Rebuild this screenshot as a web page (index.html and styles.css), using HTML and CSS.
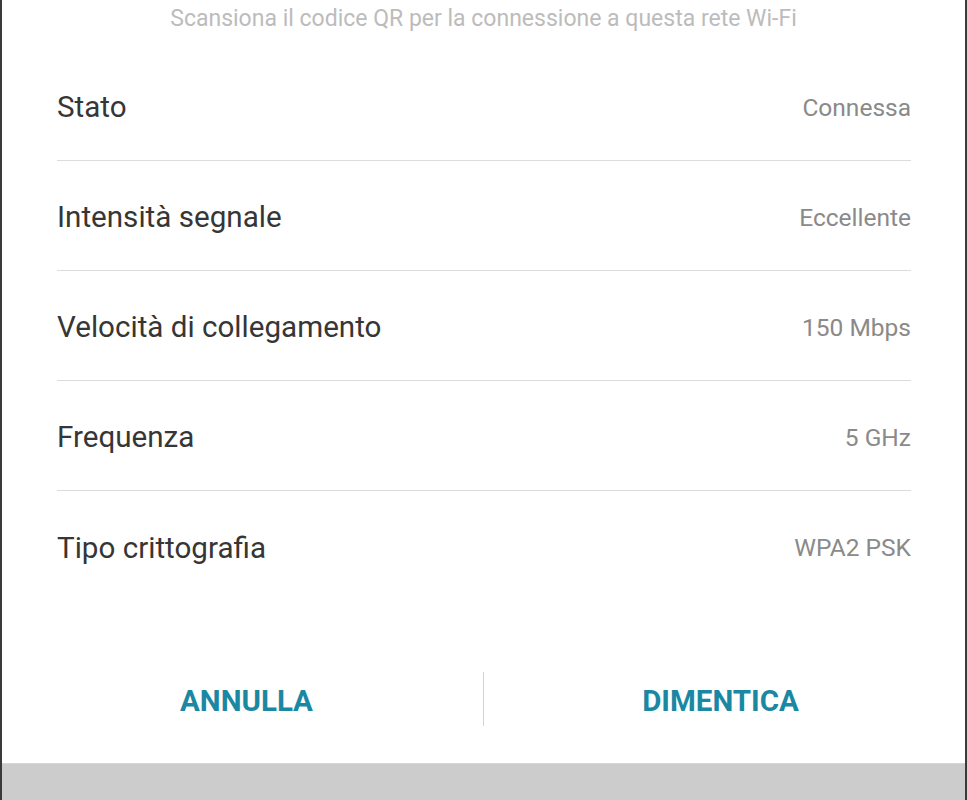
FILE: index.html
```html
<!DOCTYPE html>
<html lang="it">
<head>
<meta charset="utf-8">
<title>Wi-Fi</title>
<link rel="stylesheet" href="styles.css">
</head>
<body>
<div class="screen">
  <div class="dialog">
    <div class="hint">Scansiona il codice QR per la connessione a questa rete Wi-Fi</div>
    <div class="list">
      <div class="row"><span class="label">Stato</span><span class="value">Connessa</span></div>
      <div class="row"><span class="label">Intensità segnale</span><span class="value">Eccellente</span></div>
      <div class="row"><span class="label">Velocità di collegamento</span><span class="value">150 Mbps</span></div>
      <div class="row"><span class="label">Frequenza</span><span class="value">5 GHz</span></div>
      <div class="row"><span class="label">Tipo crittografia</span><span class="value">WPA2 PSK</span></div>
    </div>
    <div class="actions">
      <button class="btn">ANNULLA</button>
      <span class="sep"></span>
      <button class="btn">DIMENTICA</button>
    </div>
  </div>
  <div class="bottom"></div>
</div>
</body>
</html>
```
FILE: styles.css
```css
html, body {
  margin: 0;
  padding: 0;
  background: #ffffff;
}
body {
  font-family: Roboto, "Noto Sans", "Liberation Sans", sans-serif;
}
.screen {
  height: 800px;
  box-sizing: border-box;
  border-left: 2px solid #3a3a3a;
  border-right: 2px solid #3a3a3a;
  display: flex;
  flex-direction: column;
  overflow: hidden;
}
.dialog {
  flex: 1;
  display: flex;
  flex-direction: column;
  background: #ffffff;
}
.hint {
  height: 51px;
  line-height: 38px;
  text-align: center;
  font-size: 23px;
  color: #bcbcbc;
}
.list {
  padding: 0 54px 0 55px;
}
.row {
  height: 110px;
  box-sizing: border-box;
  display: flex;
  align-items: center;
  justify-content: space-between;
  border-bottom: 1px solid #dcdcdc;
  padding-top: 3px;
}
.row:last-child {
  border-bottom: none;
}
.label {
  font-size: 29.6px;
  color: #363636;
}
.value {
  font-size: 24.5px;
  color: #8a8a8a;
}
.actions {
  display: flex;
  align-items: center;
  padding: 70px 8px 0;
}
.btn {
  flex: 1;
  height: 56px;
  border: none;
  background: none;
  font-family: inherit;
  font-size: 29.5px;
  font-weight: 700;
  color: #1b88a3;
  padding: 0;
  padding-top: 3px;
}
.sep {
  width: 1px;
  height: 54px;
  background: #d4d4d4;
}
.bottom {
  height: 36px;
  background: #cccccc;
  border-top: 1px solid #d6d6d6;
}
```
